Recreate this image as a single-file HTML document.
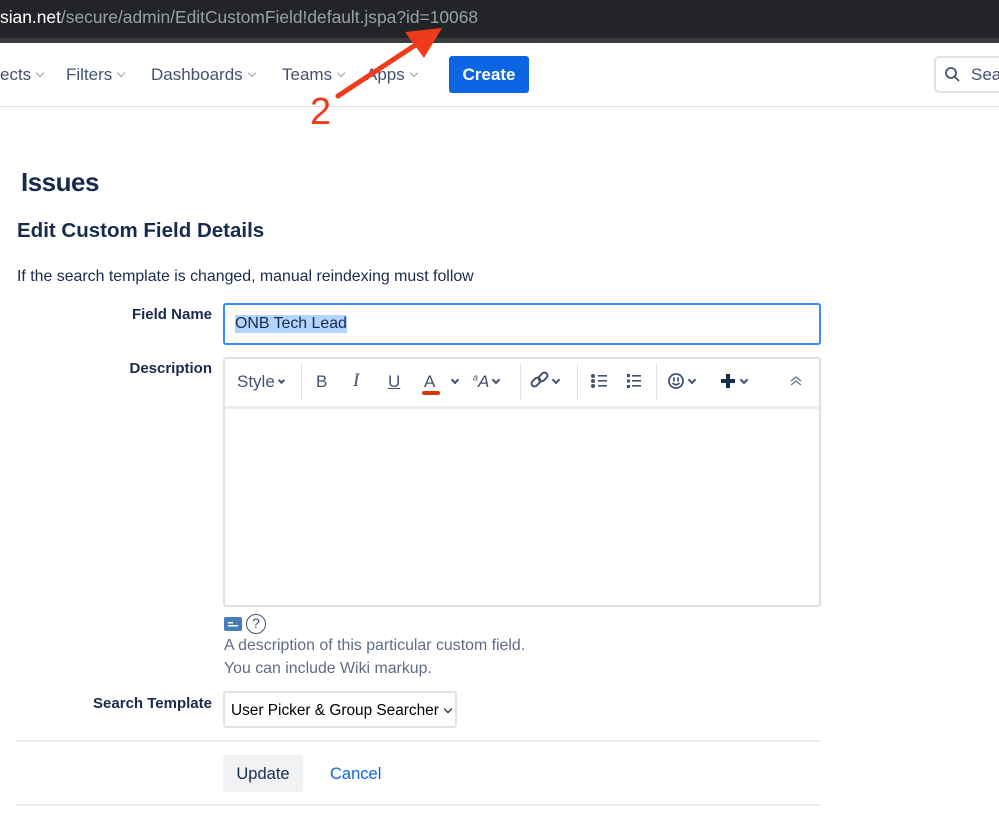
<!DOCTYPE html>
<html><head><meta charset="utf-8"><style>
*{box-sizing:border-box;margin:0;padding:0}
body{width:999px;height:818px;overflow:hidden;background:#fff;font-family:"Liberation Sans",Arial,sans-serif;color:#172b4d;position:relative}
.a{position:absolute;white-space:nowrap}
.bar{left:0;top:0;width:999px;height:38px;background:#232427}
.bar2{left:0;top:38px;width:999px;height:5px;background:#3b3c3f}
.nav{font-size:17px;color:#42526e;top:65px}
.chev{display:inline-block;width:6px;height:6px;border-right:1.5px solid #97a0af;border-bottom:1.5px solid #97a0af;transform:rotate(45deg);margin-left:6px;vertical-align:4px}
.lbl{font-size:15px;font-weight:bold;text-align:right;width:200px;left:12px}
.tb{font-size:17px;color:#42526e;top:372px}
.sep{position:absolute;top:364px;width:1px;height:36px;background:#dfe1e6}
.dch{display:inline-block;width:6px;height:6px;border-right:2px solid #42526e;border-bottom:2px solid #42526e;transform:rotate(45deg);vertical-align:4px;margin-left:4px}
.t{font-size:15.9px}
</style></head><body>
<div class="a bar"></div><div class="a bar2"></div>
<div class="a" style="left:0;top:7px;font-size:17.4px;color:#fff">sian.net<span style="color:#9aa0a6">/secure/admin/EditCustomField!default.jspa?id=10068</span></div>
<div class="a" style="left:0;top:106px;width:999px;height:1px;background:#dfe1e6"></div>
<div class="a nav" style="left:0">ects<span class="chev"></span></div>
<div class="a nav" style="left:66px">Filters<span class="chev"></span></div>
<div class="a nav" style="left:151px">Dashboards<span class="chev"></span></div>
<div class="a nav" style="left:282px">Teams<span class="chev"></span></div>
<div class="a nav" style="left:366px">Apps<span class="chev"></span></div>
<div class="a" style="left:449px;top:56px;width:80px;height:37px;background:#0c66e4;border-radius:3px;color:#fff;font-size:17px;font-weight:bold;text-align:center;line-height:37px">Create</div>
<div class="a" style="left:934px;top:56px;width:80px;height:37px;border:2px solid #dfe1e6;border-radius:5px"></div>
<svg class="a" style="left:944px;top:66px" width="18" height="18"><circle cx="7" cy="7" r="5" fill="none" stroke="#42526e" stroke-width="1.8"/><line x1="11" y1="11" x2="15" y2="15" stroke="#42526e" stroke-width="1.8"/></svg>
<div class="a" style="left:971px;top:65px;font-size:17px;color:#42526e">Sea</div>
<svg class="a" style="left:0;top:0" width="999" height="140"><line x1="338" y1="96" x2="420" y2="42" stroke="#f03a1e" stroke-width="5" stroke-linecap="round"/><polygon points="442,28 405,32 424,58" fill="#f03a1e"/></svg>
<div class="a" style="left:310px;top:91px;font-size:38px;color:#f03a1e">2</div>
<div class="a" style="left:21px;top:167px;font-size:26px;font-weight:bold;letter-spacing:-0.5px">Issues</div>
<div class="a" style="left:17px;top:219px;font-size:20.5px;font-weight:bold">Edit Custom Field Details</div>
<div class="a t" style="left:17px;top:268px">If the search template is changed, manual reindexing must follow</div>
<div class="a lbl" style="top:306px">Field Name</div>
<div class="a" style="left:223px;top:303px;width:598px;height:42px;border:2px solid #388bff;border-radius:3px"></div>
<div class="a t" style="left:235px;top:315px;background:#b3d4fd;color:#172b4d">ONB Tech Lead</div>
<div class="a lbl" style="top:360px">Description</div>
<div class="a" style="left:223px;top:357px;width:598px;height:250px;border:2px solid #dfe1e6;border-radius:3px"></div>
<div class="a" style="left:225px;top:406px;width:594px;height:3px;background:#ebecf0"></div>
<div class="a tb" style="left:237px">Style<span class="dch" style="width:5px;height:5px"></span></div>
<div class="sep" style="left:301px"></div>
<div class="a tb" style="left:316px">B</div>
<div class="a tb" style="left:353px;font-family:'Liberation Serif',serif;font-style:italic;font-size:19px;top:370px">I</div>
<div class="a tb" style="left:388px;text-decoration:underline">U</div>
<div class="a tb" style="left:424px">A</div>
<div class="a" style="left:422px;top:391px;width:18px;height:4px;border-radius:2px;background:#de350b"></div>
<div class="a tb" style="left:448px"><span class="dch"></span></div>
<div class="a tb" style="left:473px;font-style:italic"><sup style="font-size:9px">a</sup>A<span class="dch"></span></div>
<div class="sep" style="left:520px"></div>
<svg class="a" style="left:530px;top:371px" width="22" height="20"><g fill="none" stroke="#42526e" stroke-width="2"><rect x="1" y="8" width="10" height="6" rx="3" transform="rotate(-45 6 11)"/><rect x="8" y="3" width="10" height="6" rx="3" transform="rotate(-45 13 6)"/></g></svg>
<div class="a tb" style="left:549px"><span class="dch"></span></div>
<div class="sep" style="left:577px"></div>
<svg class="a" style="left:590px;top:373px" width="20" height="16"><g fill="#42526e"><circle cx="3" cy="3" r="2"/><circle cx="3" cy="8" r="2"/><circle cx="3" cy="13" r="2"/><rect x="8" y="2" width="9" height="1.6"/><rect x="8" y="7" width="9" height="1.6"/><rect x="8" y="12" width="9" height="1.6"/></g></svg>
<svg class="a" style="left:626px;top:373px" width="20" height="16"><g fill="#42526e"><rect x="1" y="1" width="3" height="3"/><rect x="1" y="6.5" width="3" height="3"/><rect x="1" y="12" width="3" height="3"/><rect x="6" y="2" width="9" height="1.6"/><rect x="6" y="7" width="9" height="1.6"/><rect x="6" y="12" width="9" height="1.6"/></g></svg>
<div class="sep" style="left:656px"></div>
<svg class="a" style="left:668px;top:373px" width="18" height="18"><circle cx="8" cy="8" r="7" fill="none" stroke="#42526e" stroke-width="1.8"/><rect x="5" y="4.5" width="1.8" height="4" fill="#42526e"/><rect x="9.2" y="4.5" width="1.8" height="4" fill="#42526e"/><path d="M4.5 10 Q8 13.5 11.5 10" fill="none" stroke="#42526e" stroke-width="1.6"/></svg>
<div class="a tb" style="left:685px"><span class="dch"></span></div>
<svg class="a" style="left:721px;top:374px" width="14" height="14"><rect x="5" y="0" width="4" height="14" fill="#172b4d"/><rect x="0" y="5" width="14" height="4" fill="#172b4d"/></svg>
<div class="a tb" style="left:737px"><span class="dch"></span></div>
<svg class="a" style="left:789px;top:375px" width="14" height="12"><path d="M2 6 L7 2 L12 6 M2 10 L7 6 L12 10" fill="none" stroke="#6b778c" stroke-width="1.4"/></svg>
<svg class="a" style="left:224px;top:617px" width="18" height="14"><rect width="18" height="14" rx="2" fill="#4a7cb5"/><rect x="4" y="5" width="5" height="1.5" fill="#fff"/><rect x="4" y="8" width="10" height="1.5" fill="#fff"/></svg>
<div class="a" style="left:246px;top:614px;width:20px;height:20px;border:1.5px solid #42526e;border-radius:50%;font-size:14px;text-align:center;line-height:17px;color:#42526e">?</div>
<div class="a t" style="left:224px;top:637px;color:#5e6c84">A description of this particular custom field.</div>
<div class="a t" style="left:224px;top:660px;color:#5e6c84">You can include Wiki markup.</div>
<div class="a lbl" style="top:695px">Search Template</div>
<div class="a" style="left:223px;top:691px;width:234px;height:37px;border:2px solid #dfe1e6;border-radius:3px;font-size:15.4px;color:#000;padding:9px 0 0 6px">User Picker &amp; Group Searcher <span style="display:inline-block;width:6px;height:6px;border-right:1.2px solid #000;border-bottom:1.2px solid #000;transform:rotate(45deg);vertical-align:3px;margin-left:2px"></span></div>
<div class="a" style="left:16px;top:740px;width:805px;height:2px;background:#ebecf0"></div>
<div class="a" style="left:223px;top:755px;width:80px;height:37px;background:#f1f2f4;border-radius:3px;font-size:16.5px;text-align:center;line-height:38px">Update</div>
<div class="a" style="left:330px;top:765px;font-size:16.5px;color:#0c66e4">Cancel</div>
<div class="a" style="left:16px;top:804px;width:805px;height:2px;background:#ebecf0"></div>
</body></html>
